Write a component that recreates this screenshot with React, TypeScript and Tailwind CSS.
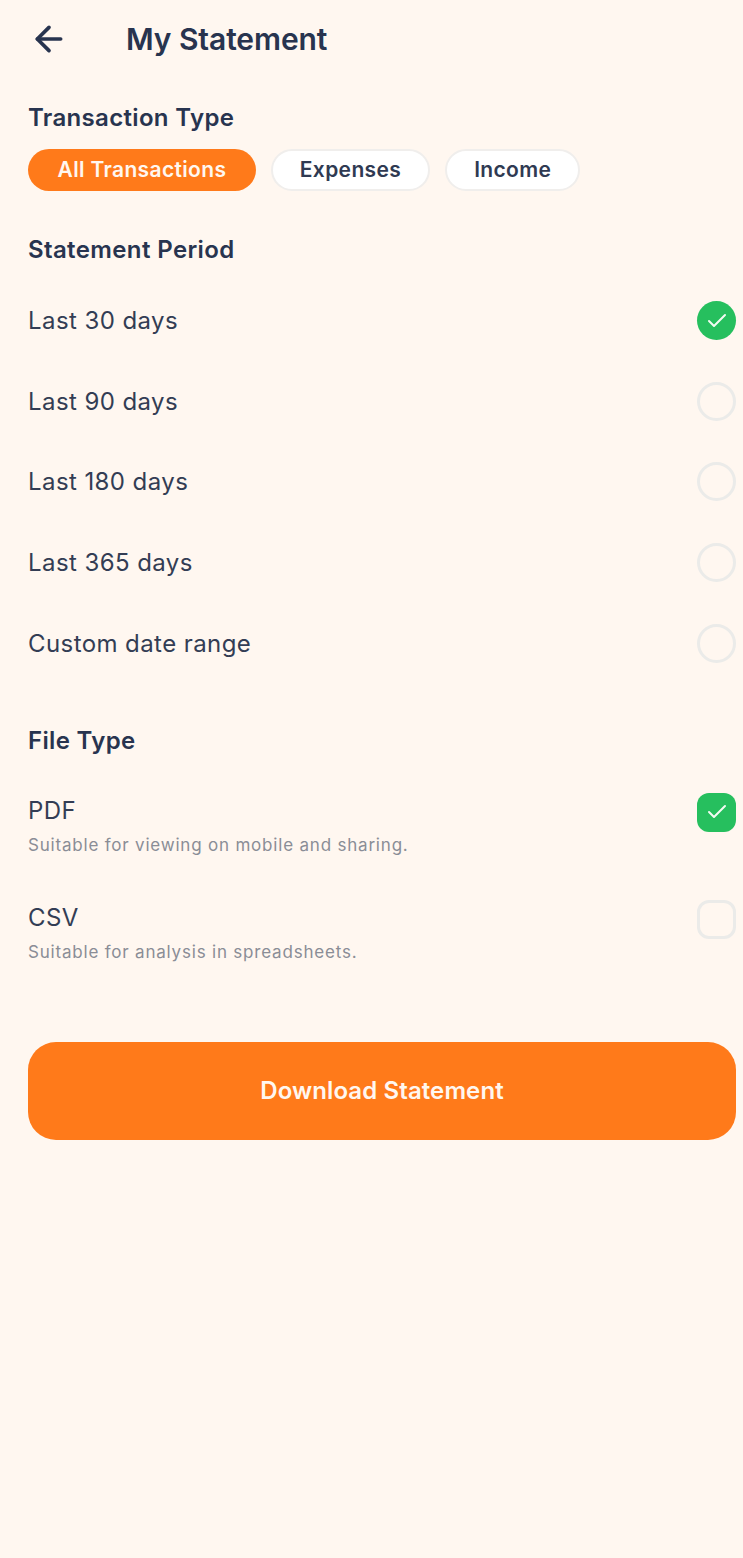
import { ArrowLeft, Check } from "lucide-react";

function Mark({ checked, shape }: { checked?: boolean; shape: string }) {
  return checked ? (
    <span className={`flex h-[39px] w-[39px] shrink-0 items-center justify-center bg-[#26bf5e] ${shape}`}>
      <Check className="h-[24px] w-[24px] text-[#f3fbf3]" strokeWidth={2} />
    </span>
  ) : (
    <span className={`h-[39px] w-[39px] shrink-0 border-[3px] border-[#ebebe9] ${shape}`} />
  );
}

function Row({ label, checked }: { label: string; checked?: boolean }) {
  return (
    <div className="mb-[41.7px] flex h-[39px] items-center justify-between">
      <span className="text-[24px] leading-[39px] tracking-[0.42px] text-[#333d54]">{label}</span>
      <Mark checked={checked} shape="rounded-full" />
    </div>
  );
}

function FileRow({ label, sub, checked, mb }: { label: string; sub: string; checked?: boolean; mb: string }) {
  return (
    <div className={`flex items-start justify-between ${mb}`}>
      <div>
        <div className="text-[24px] leading-[35px] tracking-[0.42px] text-[#333d54]">{label}</div>
        <div className="mt-[3px] text-[17px] leading-[28px] tracking-[0.8px] text-[#8a8d96]">{sub}</div>
      </div>
      <Mark checked={checked} shape="rounded-[12px]" />
    </div>
  );
}

export default function App() {
  return (
    <div className="min-h-[1558px] bg-[#fff7f0] pl-[28px] pr-[7px] font-['Inter',sans-serif]">
      <header className="flex h-[78px] items-center">
        <ArrowLeft className="ml-[1px] h-[40px] w-[40px] text-[#28344f]" strokeWidth={2.2} />
        <h1 className="ml-[57px] text-[30px] font-semibold leading-[40px] tracking-[-0.08px] text-[#28344f]">My Statement</h1>
      </header>

      <h2 className="mt-[22px] text-[24px] font-semibold leading-[36px] tracking-[0.33px] text-[#28344f]">Transaction Type</h2>
      <div className="mt-[13px] flex gap-[15px]">
        <button className="h-[42px] rounded-full bg-[#ff7a1a] px-[29.5px] text-[21px] font-semibold tracking-[0.35px] text-[#fff7f0]">All Transactions</button>
        <button className="h-[42px] rounded-full border-2 border-[#f0eeec] bg-white px-[27px] text-[21px] font-semibold tracking-[0.35px] text-[#2f3a52]">Expenses</button>
        <button className="h-[42px] rounded-full border-2 border-[#f0eeec] bg-white px-[27px] text-[21px] font-semibold tracking-[0.35px] text-[#2f3a52]">Income</button>
      </div>

      <h2 className="mt-[41px] mb-[33px] text-[24px] font-semibold leading-[36px] tracking-[0.38px] text-[#28344f]">Statement Period</h2>
      <Row label="Last 30 days" checked />
      <Row label="Last 90 days" />
      <Row label="Last 180 days" />
      <Row label="Last 365 days" />
      <Row label="Custom date range" />

      <h2 className="mt-[60px] mb-[34px] text-[24px] font-semibold leading-[36px] tracking-[0.33px] text-[#28344f]">File Type</h2>
      <FileRow label="PDF" sub="Suitable for viewing on mobile and sharing." checked mb="mb-[41px]" />
      <FileRow label="CSV" sub="Suitable for analysis in spreadsheets." mb="mb-[76px]" />

      <button className="h-[98px] w-full rounded-[28px] bg-[#ff7a1a] text-[24px] font-semibold tracking-[0.1px] text-[#fff7f0]">Download Statement</button>
    </div>
  );
}
